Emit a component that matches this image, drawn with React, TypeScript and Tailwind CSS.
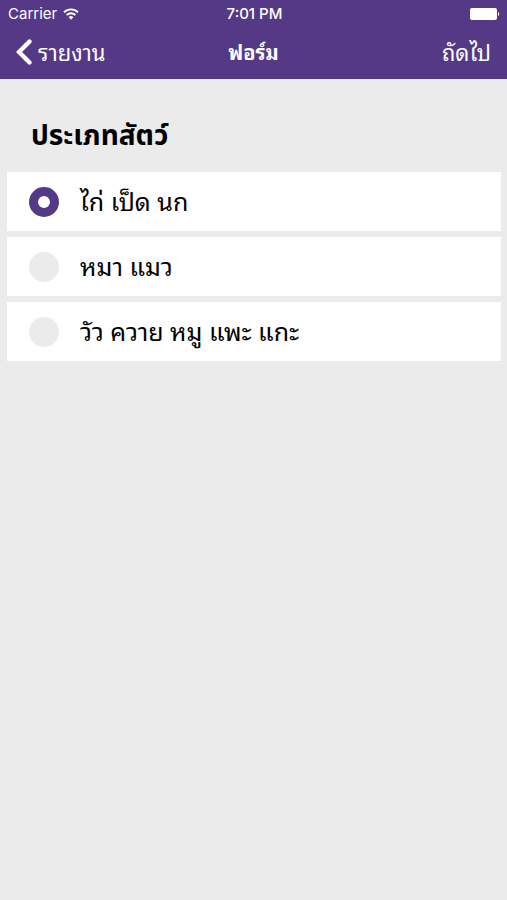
import { useState } from "react"

const animals = [
  { id: "poultry", label: "ไก่ เป็ด นก" },
  { id: "pets", label: "หมา แมว" },
  { id: "livestock", label: "วัว ควาย หมู แพะ แกะ" },
]

function StatusBar() {
  return (
    <div className="grid grid-cols-3 items-center h-7 pl-2 pr-1.5 text-[15px] font-['Inter','Roboto',sans-serif]">
      <div className="flex items-center gap-1.5">
        <span>Carrier</span>
        <svg width="16" height="12" viewBox="0 0 16 12" fill="none" stroke="currentColor" strokeWidth="1.9" aria-hidden="true">
          <path d="M1 4.2a10 10 0 0 1 14 0" />
          <path d="M3.6 7a6.3 6.3 0 0 1 8.8 0" />
          <path d="M8 11.8 5.6 9.3a3.4 3.4 0 0 1 4.8 0z" fill="currentColor" stroke="none" />
        </svg>
      </div>
      <span className="text-center font-medium">7:01 PM</span>
      <svg className="justify-self-end" width="31" height="12" viewBox="0 0 31 12" fill="currentColor" aria-hidden="true">
        <rect width="27" height="12" rx="2" />
        <path d="M28 4a2.2 2.2 0 0 1 0 4z" />
      </svg>
    </div>
  )
}

function NavBar() {
  return (
    <nav className="grid grid-cols-3 items-center h-[51px] px-4 pb-1 text-[22px] leading-7">
      <button type="button" className="flex items-center gap-1.5 justify-self-start">
        <svg width="16" height="26" viewBox="0 0 16 26" fill="none" stroke="currentColor" strokeWidth="4.4" aria-hidden="true">
          <path d="M13.5 2.5 3 13l10.5 10.5" strokeLinecap="round" />
        </svg>
        <span className="pb-0.5">รายงาน</span>
      </button>
      <h1 className="text-center text-xl leading-7 font-bold pb-0.5">ฟอร์ม</h1>
      <button type="button" className="justify-self-end pb-0.5">ถัดไป</button>
    </nav>
  )
}

export default function App() {
  const [selected, setSelected] = useState("poultry")

  return (
    <div className="min-h-screen bg-[#ebebeb] font-['Thonburi','Noto_Sans_Thai_Looped','Loma','Garuda','Noto_Sans',sans-serif]">
      <header className="bg-[#553986] text-white">
        <StatusBar />
        <NavBar />
      </header>

      <fieldset className="pl-[7px] pr-1.5">
        <legend className="px-6 pt-[38px] pb-[15px] text-[28px] leading-10 font-bold font-['Noto_Sans_Thai','Noto_Sans',sans-serif]">
          ประเภทสัตว์
        </legend>
        <div className="flex flex-col gap-1.5">
          {animals.map((item) => (
            <label key={item.id} className="flex items-center gap-[21px] h-[59px] pl-[22px] bg-white text-[25px]">
              <input
                type="radio"
                name="animal"
                value={item.id}
                checked={selected === item.id}
                onChange={() => setSelected(item.id)}
                className="appearance-none size-[30px] rounded-full bg-[#ebebeb] checked:bg-white checked:border-9 checked:border-[#553986]"
              />
              <span className="pb-0.5">{item.label}</span>
            </label>
          ))}
        </div>
      </fieldset>
    </div>
  )
}
